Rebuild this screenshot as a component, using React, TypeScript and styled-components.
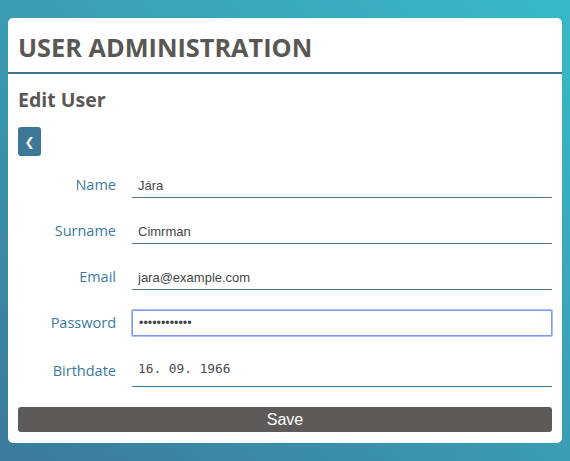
import React from "react";
import styled, { createGlobalStyle } from "styled-components";

const Global = createGlobalStyle`
  html, body { margin: 0; padding: 0; }
  body {
    min-height: 461px;
    background: linear-gradient(to top right, #3b7a9c 0%, #3a9cb2 50%, #38b9c7 100%);
    font-family: "Open Sans", "Noto Sans", sans-serif;
  }
`;

const Page = styled.div`
  padding: 18px 8px 18px 8px;
`;

const Card = styled.div`
  background: #ffffff;
  border-radius: 5px;
  height: 425px;
  box-sizing: border-box;
  display: flex;
  flex-direction: column;
`;

const Header = styled.div`
  border-bottom: 2px solid #3a7894;
  padding: 12px 10px 8px 10px;
`;

const Title = styled.h1`
  margin: 0;
  font-size: 25.3px;
  line-height: 34px;
  font-weight: 700;
  color: #5a5755;
`;

const Body = styled.div`
  padding: 12px 10px 10px 10px;
  display: flex;
  flex-direction: column;
`;

const SubTitle = styled.h2`
  margin: 0;
  font-size: 19.5px;
  line-height: 28px;
  font-weight: 700;
  color: #5a5755;
`;

const BackButton = styled.button`
  margin-top: 13px;
  width: 23px;
  height: 29px;
  border: none;
  border-radius: 3px;
  background: #3d7896;
  color: #ffffff;
  font-size: 12px;
  font-weight: 700;
  padding: 0;
  display: flex;
  align-items: center;
  justify-content: center;
  font-family: "DejaVu Sans", sans-serif;
`;

const Form = styled.div`
  display: flex;
  flex-direction: column;
  margin-top: 14px;
  gap: 18px;
`;

const Row = styled.div<{ $tall?: boolean }>`
  display: grid;
  grid-template-columns: 98px 1fr;
  column-gap: 16px;
  align-items: end;
  height: ${(p) => (p.$tall ? "33px" : "28px")};
`;

const Label = styled.label<{ $lift?: boolean }>`
  text-align: right;
  font-size: 14.5px;
  color: #3a7aa3;
  line-height: 20px;
  padding-bottom: ${(p) => (p.$lift ? "6px" : "3px")};
`;

const Input = styled.input<{ $focused?: boolean; $mono?: boolean }>`
  box-sizing: border-box;
  height: 28px;
  width: 100%;
  border: none;
  border-bottom: 1px solid #4a7890;
  outline: none;
  padding: 3px 6px 0 6px;
  font-family: "Liberation Sans", Arial, sans-serif;
  font-size: 13px;
  color: #454545;
  background: #fff;
  ${(p) =>
    p.$focused &&
    `
    height: 26px;
    padding: 0 6px;
    border: 1px solid #7d9cf0;
    box-shadow: 0 0 0 1px #aabdfc;
    border-radius: 1px;
    font-size: 12.5px;
  `}
  ${(p) =>
    p.$mono &&
    `
    height: 33px;
    padding: 0 6px 3px 6px;
    font-family: "DejaVu Sans Mono", monospace;
    font-size: 12.8px;
    border-bottom: 1px solid #3a7a96;
    color: #4a4a4a;
  `}
`;

const SaveButton = styled.button`
  margin-top: 20px;
  height: 25px;
  border: none;
  border-radius: 3px;
  background: #5e5a57;
  color: #ffffff;
  font-family: "Liberation Sans", Arial, sans-serif;
  font-size: 16px;
  padding: 0;
`;

export default function App() {
  return (
    <>
      <Global />
      <Page>
        <Card>
          <Header>
            <Title>USER ADMINISTRATION</Title>
          </Header>
          <Body>
            <SubTitle>Edit User</SubTitle>
            <div>
              <BackButton aria-label="Back">❮</BackButton>
            </div>
            <Form>
              <Row>
                <Label>Name</Label>
                <Input defaultValue="Jára" />
              </Row>
              <Row>
                <Label>Surname</Label>
                <Input defaultValue="Cimrman" />
              </Row>
              <Row>
                <Label>Email</Label>
                <Input defaultValue="jara@example.com" />
              </Row>
              <Row>
                <Label>Password</Label>
                <Input $focused type="password" defaultValue="............" />
              </Row>
              <Row $tall>
                <Label $lift>Birthdate</Label>
                <Input $mono defaultValue="16. 09. 1966" />
              </Row>
            </Form>
            <SaveButton>Save</SaveButton>
          </Body>
        </Card>
      </Page>
    </>
  );
}
